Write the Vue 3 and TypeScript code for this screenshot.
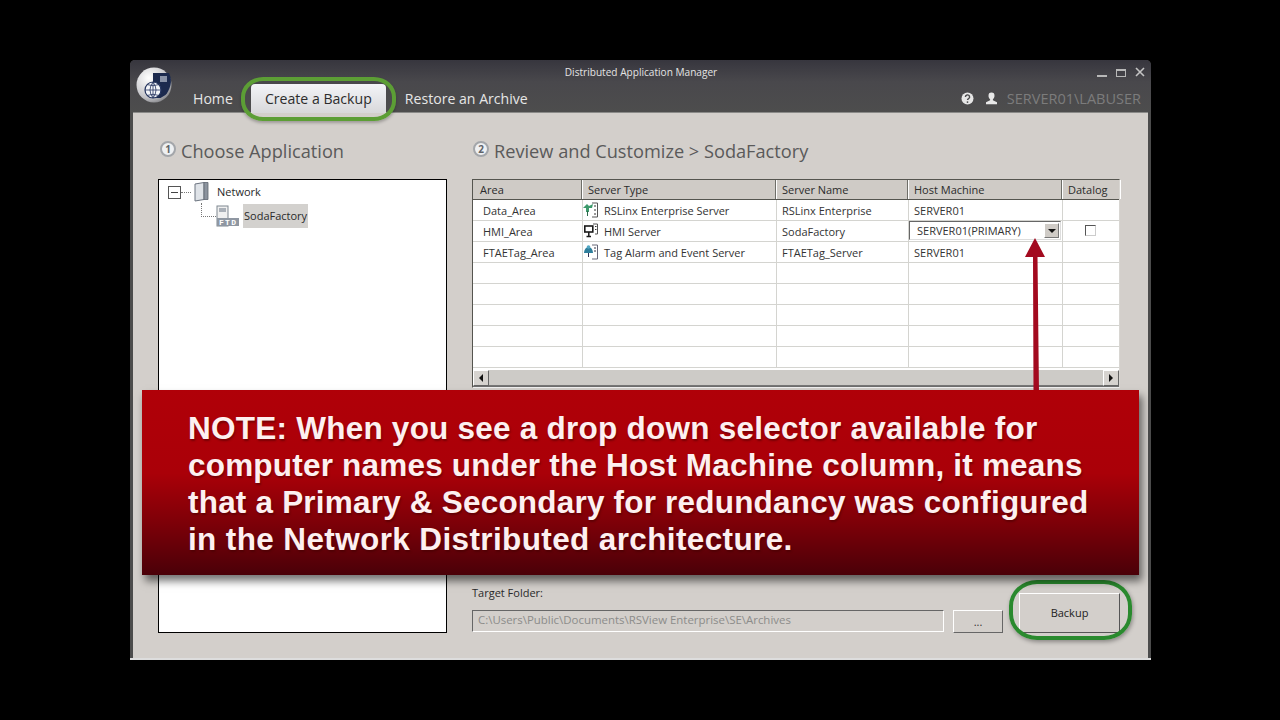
<script setup lang="ts">
interface Row { area: string; type: string; icon: string; name: string; host: string; combo?: boolean }
const rows: Row[] = [
  { area: 'Data_Area', type: 'RSLinx Enterprise Server', icon: 'rs', name: 'RSLinx Enterprise', host: 'SERVER01' },
  { area: 'HMI_Area', type: 'HMI Server', icon: 'hmi', name: 'SodaFactory', host: 'SERVER01(PRIMARY)', combo: true },
  { area: 'FTAETag_Area', type: 'Tag Alarm and Event Server', icon: 'tag', name: 'FTAETag_Server', host: 'SERVER01' },
]
const emptyRows = [1, 2, 3, 4, 5]
const tabs = ['Home', 'Create a Backup', 'Restore an Archive']
const noteLines = [
  'NOTE: When you see a drop down selector available for',
  'computer names under the Host Machine column, it means',
  'that a Primary & Secondary for redundancy was configured',
  'in the Network Distributed architecture.',
]
</script>

<template>
  <div class="window">
    <header class="chrome">
      <div class="titlebar">
        <span class="title">Distributed Application Manager</span>
        <div class="winbtns">
          <span class="min"></span>
          <span class="max"></span>
          <svg width="10" height="10" viewBox="0 0 10 10"><path d="M1 1l8 8M9 1l-8 8" stroke="#c4c4c4" stroke-width="1.6" /></svg>
        </div>
      </div>
      <div class="menubar">
        <svg class="logo" width="36" height="36" viewBox="0 0 36 36">
          <defs>
            <radialGradient id="lg" cx="35%" cy="30%" r="80%">
              <stop offset="0" stop-color="#ffffff" />
              <stop offset="0.7" stop-color="#c4c4c8" />
              <stop offset="1" stop-color="#77787c" />
            </radialGradient>
          </defs>
          <circle cx="18" cy="18" r="17.5" fill="url(#lg)" />
          <path d="M17 6h16a18 18 0 0 1 1.500 12c-1 4-3 8-5 10l-5 3H17z" fill="#1c2a4e" />
          <rect x="24" y="9" width="7" height="6" fill="#8a93a8" />
          <circle cx="17" cy="23" r="8" fill="#f4f6fa" stroke="#24345e" stroke-width="1.2" />
          <path d="M9 23h16M17 15v16M11 17.500q6 2.500 12 0M11 28.500q6-2.500 12 0M17 15q-6 8 0 16M17 15q6 8 0 16" fill="none" stroke="#24345e" stroke-width="0.8" />
        </svg>
        <nav class="tabs">
          <span v-for="t in tabs" :key="t" class="tab" :class="{ active: t === 'Create a Backup' }">{{ t }}</span>
        </nav>
        <div class="userbox">
          <svg class="helpicon" width="13" height="13" viewBox="0 0 13 13">
            <circle cx="6.5" cy="6.5" r="6" fill="#e6e6e6" />
            <path d="M4.4 5a2.1 2 0 1 1 3.2 1.6c-.8.5-1.100.8-1.100 1.500" fill="none" stroke="#4b4b4d" stroke-width="1.4" />
            <circle cx="6.5" cy="10.1" r=".9" fill="#4b4b4d" />
          </svg>
          <svg width="13" height="13" viewBox="0 0 13 13">
            <path d="M6.500 0.500a3 3.200 0 0 1 3 3.400c0 1.600-1 2.800-1.600 3.400v1l4.100 2v2H1v-2l4.100-2v-1C4.400 6.700 3.500 5.500 3.500 3.900a3 3.200 0 0 1 3-3.400z" fill="#e8e8e8" />
          </svg>
          <span class="user">SERVER01\LABUSER</span>
        </div>
      </div>
    </header>

    <main class="content">
      <section class="left">
        <h2 class="heading"><span class="num">1</span>Choose Application</h2>
        <div class="tree">
          <div class="node net">
            <span class="expander"></span>
            <span class="dots-h"></span>
            <svg class="neticon" width="16" height="20" viewBox="0 0 16 20">
              <path d="M1 2l9-1.500v17l-9 1.500z" fill="#dfe3e8" stroke="#6c7480" />
              <path d="M10 .5h4v17h-4z" fill="#8b939e" stroke="#5d6570" stroke-width=".8" />
            </svg>
            <span class="netlabel">Network</span>
          </div>
          <div class="node app">
            <span class="dots-l"></span>
            <svg width="24" height="22" viewBox="0 0 24 22">
              <rect x="1" y="1" width="11" height="20" fill="#f0f0f0" stroke="#7f8790" />
              <rect x="3" y="3" width="7" height="4" fill="#aab0b8" />
              <rect x="1" y="13" width="22" height="8" fill="#8f97a2" />
              <text x="3" y="20" class="ftd">FTD</text>
            </svg>
            <span class="applabel">SodaFactory</span>
          </div>
        </div>
      </section>

      <section class="right">
        <h2 class="heading"><span class="num">2</span>Review and Customize &gt; SodaFactory</h2>
        <div class="grid">
          <div class="row head">
            <span>Area</span><span>Server Type</span><span>Server Name</span><span>Host Machine</span><span>Datalog</span>
          </div>
          <div v-for="r in rows" :key="r.area" class="row">
            <span class="pad">{{ r.area }}</span>
            <span class="typecell">
              <svg v-if="r.icon === 'rs'" width="16" height="16" viewBox="0 0 16 16">
                <path d="M9 1h5.500v14H9" fill="#fff" stroke="#555" />
                <path d="M11 4h2M11 8h2M11 12h2" stroke="#333" />
                <path d="M0 6l4-4 2 2 4-2-1 4H6v4H3V6z" fill="#3d9a6c" />
                <path d="M4.500 9v5" stroke="#2a6a4a" />
              </svg>
              <svg v-else-if="r.icon === 'hmi'" width="16" height="16" viewBox="0 0 16 16">
                <path d="M10 1h4.500v10H12" fill="#fff" stroke="#555" />
                <path d="M12 3.500h1.500M12 6.500h1.500" stroke="#333" />
                <rect x="1.800" y="3" width="8" height="6" fill="#fff" stroke="#1a1a1a" stroke-width="1.600" />
                <path d="M5.800 9v4M3.500 13.500h4.500" stroke="#1a1a1a" stroke-width="1.500" />
              </svg>
              <svg v-else width="16" height="16" viewBox="0 0 16 16">
                <path d="M9 1h5.500v14H9" fill="#fff" stroke="#667" />
                <path d="M11 4h2M11 7h2" stroke="#334" />
                <path d="M1 9a4.500 6 0 0 1 9 0z" fill="#2f7f9c" />
                <circle cx="5.500" cy="3" r="1.800" fill="#54a8c4" />
                <path d="M5.500 9v4" stroke="#335" />
              </svg>
              {{ r.type }}
            </span>
            <span class="pad">{{ r.name }}</span>
            <span v-if="r.combo" class="combocell">
              <span class="combo">
                <span class="combotext">{{ r.host }}</span>
                <span class="combobtn"></span>
              </span>
            </span>
            <span v-else class="pad">{{ r.host }}</span>
            <span class="checkcell"><i v-if="r.combo" class="check"></i></span>
          </div>
          <div v-for="n in emptyRows" :key="n" class="row">
            <span></span><span></span><span></span><span></span><span></span>
          </div>
          <div class="scroll">
            <span class="sbtn"><i class="tri-l"></i></span>
            <span class="track"></span>
            <span class="sbtn"><i class="tri-r"></i></span>
          </div>
        </div>
        <div class="target">
          <div class="targetmain">
            <label class="tlabel">Target Folder:</label>
            <div class="inputrow">
              <span class="path">C:\Users\Public\Documents\RSView Enterprise\SE\Archives</span>
              <span class="browse">...</span>
            </div>
          </div>
          <span class="backup">Backup</span>
        </div>
      </section>
    </main>

    <span class="ring ring-tab"></span>
    <span class="ring ring-backup"></span>

    <svg class="arrow" width="30" height="156" viewBox="0 0 30 156">
      <path d="M15 0L25 19H17.500L19 156H13.500L13 19H5z" fill="#a30a1f" />
    </svg>

    <aside class="note">
      <p v-for="l in noteLines" :key="l">{{ l }}</p>
    </aside>
  </div>
</template>

<style>
html, body { background: #000; margin: 0; }
</style>

<style scoped>
.window {
  position: relative;
  box-sizing: border-box;
  width: 1021px;
  height: 600px;
  margin: 60px 0 0 130px;
  background: #4c4c4c;
  border-radius: 5px 5px 0 0;
  border-bottom: 2px solid #dddddd;
  display: flex;
  flex-direction: column;
  overflow: visible;
  font-family: "Open Sans", sans-serif;
}
.chrome {
  height: 52px;
  flex: none;
  background: linear-gradient(#37363e 0, #49484c 22px, #4d4d4d 100%);
  border-radius: 5px 5px 0 0;
  display: flex;
  flex-direction: column;
}
.titlebar {
  height: 24px;
  flex: none;
  position: relative;
  display: flex;
  align-items: center;
  justify-content: center;
}
.title {
  font-size: 10.100px;
  color: #e4e4e4;
  padding-left: 1px;
}
.winbtns {
  position: absolute;
  right: 6px;
  top: 7px;
  display: flex;
  align-items: center;
  gap: 9px;
}
.min { width: 10px; height: 2px; margin-top: 8px; background: #b8b8b8; }
.max { width: 10px; height: 8px; margin-top: 1px; box-sizing: border-box; border: 1px solid #b8b8b8; border-top-width: 2px; }
.menubar {
  flex: 1;
  display: flex;
  align-items: flex-end;
  padding-left: 6px;
  position: relative;
}
.logo { position: absolute; left: 6px; top: -17px; }
.tabs {
  display: flex;
  align-items: flex-end;
  margin-left: 50px;
  height: 29px;
}
.tab {
  font-size: 14.100px;
  color: #e6e6e6;
  line-height: 29px;
  padding: 0 7px;
  margin-right: 4px;
  white-space: nowrap;
}
.tab.active {
  width: 135px;
  box-sizing: border-box;
  text-align: center;
  padding: 0;
  margin: 0 12px 0 7px;
  color: #2c2c2c;
  background: linear-gradient(#f3f4f8, #d8d8da);
  border-radius: 4px 4px 0 0;
}
.userbox {
  margin-left: auto;
  margin-right: 10px;
  height: 29px;
  display: flex;
  align-items: center;
  gap: 9px;
}
.helpicon { margin-right: 2px; }
.user {
  font-size: 14.500px;
  color: #7c7c7c;
  white-space: nowrap;
}
.content {
  flex: 1;
  margin: 0 3px;
  border-top: 1px solid #8a8a88;
  display: flex;
  gap: 25px;
  padding: 26px 30px 25px 25px;
  box-sizing: border-box;
  background: #d3cfcb;
  min-height: 0;
}
.left { width: 289px; flex: none; display: flex; flex-direction: column; }
.right { width: 648px; flex: none; display: flex; flex-direction: column; }
.heading {
  margin: 0;
  height: 40px;
  font-size: 18.200px;
  font-weight: 400;
  line-height: 24px;
  color: #5a5a5a;
  display: flex;
  align-items: flex-start;
  white-space: nowrap;
}
.num {
  width: 16px;
  height: 16px;
  margin: 2px 5px 0 2px;
  border-radius: 50%;
  box-sizing: border-box;
  border: 2px solid #a3a6aa;
  background: #eef0f2;
  color: #5f6368;
  font-size: 10px;
  font-weight: 700;
  line-height: 12px;
  text-align: center;
}
.right .num { margin-left: 1px; }
.tree {
  flex: 1;
  background: #fff;
  border: 1px solid #000;
  padding: 2px 0 0 9px;
  font-size: 11px;
  color: #2a2a2a;
  min-height: 0;
}
.node { display: flex; align-items: center; position: relative; }
.net { height: 20px; }
.expander {
  width: 13px;
  height: 13px;
  box-sizing: border-box;
  border: 1px solid #555;
  background: linear-gradient(#444, #444) center / 7px 1px no-repeat #fff;
}
.dots-h { width: 10px; border-top: 1px dotted #777; }
.neticon { margin-left: 3px; }
.netlabel { margin-left: 7px; margin-top: -2px; }
.app { height: 24px; margin: 2px 0 0 33px; }
.dots-l {
  width: 15px;
  height: 14px;
  box-sizing: border-box;
  border-left: 1px dotted #777;
  border-bottom: 1px dotted #777;
  margin-top: -12px;
}
.ftd { font: 700 8px "Liberation Mono", monospace; letter-spacing: 1.300px; fill: #fff; }
.applabel {
  background: #d3d1ce;
  padding: 4px 1px 5px 1px;
  margin-left: 3px;
  line-height: 15px;
}
.grid {
  height: 209px;
  flex: none;
  background: #fff;
  border: 1px solid #55554f;
  border-right-color: #d8d6d2;
  border-bottom-color: #efefef;
  box-sizing: border-box;
  font-size: 11px;
  color: #333;
  display: flex;
  flex-direction: column;
}
.row {
  display: grid;
  grid-template-columns: 110px 194px 132px 154px 57px;
  height: 21px;
  flex: none;
  border-bottom: 1px solid #d4d4d0;
  box-sizing: border-box;
}
.row > span {
  border-right: 1px solid #d4d4d0;
  display: flex;
  align-items: center;
  white-space: nowrap;
  min-width: 0;
}
.row > span:last-child { border-right: 0; }
.row.head {
  height: 20px;
  grid-template-columns: 109px 194px 132px 154px 58px;
  background: #cfcbc6;
  border-bottom: 1px solid #55554f;
  color: #2c2c2c;
}
.head > span {
  padding-left: 6px;
  border-right: 1px solid #6e6e68;
  box-shadow: 1px 0 0 #fff;
}
.row.head > span:first-child { padding-left: 7px; }
.row > .pad { padding-left: 5px; }
.row > .pad:first-child { padding-left: 10px; }
.typecell { padding-left: 0; gap: 5px; }
.combocell { padding: 0 1px 0 0; }
.combo {
  flex: 1;
  height: 19px;
  box-sizing: border-box;
  margin-top: -1px;
  border: 1px solid #666;
  border-right-color: #ddd;
  border-bottom-color: #ddd;
  background: #fff;
  display: flex;
  align-items: center;
  padding-left: 7px;
}
.combotext { flex: 1; }
.combobtn {
  width: 15px;
  height: 15px;
  margin-right: 1px;
  background: #cfcbc6;
  border: 1px solid #777;
  border-top-color: #fff;
  border-left-color: #fff;
  box-sizing: border-box;
  display: flex;
  align-items: center;
  justify-content: center;
}
.combobtn::after {
  content: "";
  border: 4px solid transparent;
  border-top: 4px solid #111;
  border-bottom: 0;
}
.checkcell { justify-content: center; padding: 0 2px 2px 0; }
.check {
  width: 11px;
  height: 11px;
  box-sizing: border-box;
  border: 1px solid #555;
  border-right-color: #ccc;
  border-bottom-color: #ccc;
  background: #fff;
  display: block;
}
.scroll {
  height: 16px;
  margin-top: 2px;
  display: flex;
  flex: none;
  background: #c8c6c2;
  border-bottom: 1px solid #6e6e6e;
  box-sizing: content-box;
}
.track { flex: 1; background: #cdcbc7; border-bottom: 1px solid #777; }
.sbtn {
  width: 16px;
  background: #d6d3cf;
  border: 1px solid #666;
  border-top-color: #fff;
  border-left-color: #fff;
  box-sizing: border-box;
  display: flex;
  align-items: center;
  justify-content: center;
}
.tri-l { border: 4px solid transparent; border-right: 4px solid #111; border-left: 0; }
.tri-r { border: 4px solid transparent; border-left: 4px solid #111; border-right: 0; }
.target {
  margin-top: auto;
  display: flex;
  align-items: flex-end;
}
.targetmain { flex: 1; min-width: 0; display: flex; flex-direction: column; gap: 10px; }
.tlabel { font-size: 11px; line-height: 14px; margin-top: -1px; color: #2a2a2a; }
.inputrow { display: flex; gap: 9px; }
.path {
  width: 472px;
  height: 22px;
  box-sizing: border-box;
  border: 1px solid #fff;
  border-top: 1px solid #666;
  border-left: 1px solid #666;
  padding-left: 5px;
  font-size: 11.450px;
  line-height: 17px;
  color: #8c8c8a;
  white-space: nowrap;
}
.browse {
  width: 50px;
  height: 23px;
  box-sizing: border-box;
  border: 1px solid #666;
  border-top-color: #fff;
  border-left-color: #fff;
  text-align: center;
  font-size: 11px;
  line-height: 22px;
  color: #333;
}
.backup {
  width: 101px;
  height: 40px;
  flex: none;
  box-sizing: border-box;
  border: 1px solid #555;
  border-top-color: #fff;
  border-left-color: #fff;
  text-align: center;
  font-size: 11px;
  line-height: 37px;
  color: #222;
}
.ring {
  position: absolute;
  box-sizing: border-box;
  border-radius: 22px / 20px;
  pointer-events: none;
}
.ring-tab {
  left: 111px;
  top: 17px;
  width: 155px;
  height: 44px;
  border: 4px solid #5c9e35;
  box-shadow: 0 2px 3px rgba(0, 0, 0, .25);
}
.ring-backup {
  left: 879px;
  top: 520px;
  width: 123px;
  height: 60px;
  border-radius: 28px / 26px;
  border: 4px solid #2a8a2e;
  box-shadow: 1px 2px 4px rgba(0, 0, 0, .35);
}
.arrow { position: absolute; left: 890px; top: 178px; }
.note {
  position: absolute;
  left: 12px;
  top: 330px;
  width: 997px;
  height: 185px;
  box-sizing: border-box;
  padding: 20px 0 0 46px;
  background: linear-gradient(#b00008 0, #aa0008 45%, #7d0008 72%, #4a0008 100%);
  box-shadow: 3px 6px 8px rgba(0, 0, 0, .55);
  font-family: "Liberation Sans", Arial, sans-serif;
  font-weight: 700;
  font-size: 31.500px;
  line-height: 37px;
  letter-spacing: 0.2px;
  color: #fdf0f0;
  text-shadow: 1px 2px 2px rgba(60, 0, 0, .45);
}
.note p { margin: 0; white-space: nowrap; }
.note p:nth-child(1) { letter-spacing: 0.24px; }
.note p:nth-child(4) { letter-spacing: 0.37px; }
</style>
